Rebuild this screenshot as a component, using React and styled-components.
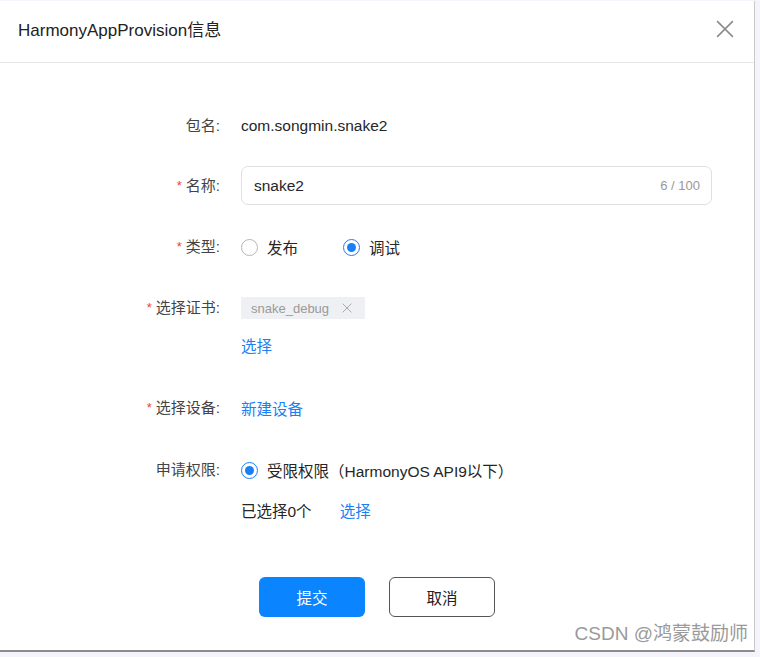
import styled, { createGlobalStyle } from "styled-components";

const GlobalStyle = createGlobalStyle`
  html, body {
    margin: 0;
    padding: 0;
    background: #f5f3fc;
    font-family: "Liberation Sans", "Noto Sans CJK SC", sans-serif;
  }
`;

const Page = styled.div`
  width: 760px;
  height: 657px;
  padding-top: 1px;
  box-sizing: border-box;
`;

const Dialog = styled.div`
  position: relative;
  width: 755px;
  height: 651px;
  background: #fff;
  border-right: 1px solid #c8c8c8;
  border-bottom: 2px solid #8c8c8c;
  box-sizing: border-box;
`;

const Header = styled.div`
  height: 62px;
  display: flex;
  align-items: center;
  justify-content: space-between;
  padding: 0 18px 6px 18px;
  box-sizing: border-box;
  border-bottom: 1px solid #e6e6e6;
`;

const Title = styled.h1`
  margin: 0;
  font-size: 17px;
  font-weight: 400;
  color: #222;
`;

const CloseButton = styled.button`
  border: none;
  background: none;
  padding: 0;
  margin-right: 2px;
  display: flex;
  cursor: pointer;
`;

const Body = styled.div`
  padding-top: 52px;
  display: flex;
  flex-direction: column;
`;

const Row = styled.div`
  display: flex;
  align-items: flex-start;
  margin-top: ${(p) => p.$mt || 0}px;
`;

const Label = styled.div`
  width: 241px;
  flex-shrink: 0;
  text-align: right;
  padding-right: 21px;
  box-sizing: border-box;
  font-size: 15px;
  color: #444;
  line-height: ${(p) => p.$lh || 22}px;
`;

const Star = styled.span`
  color: #f23c3c;
  margin-right: 4px;
  font-size: 13px;
  position: relative;
  top: -1px;
`;

const Control = styled.div`
  display: flex;
  flex-direction: column;
  gap: ${(p) => p.$gap || 0}px;
`;

const Line = styled.div`
  display: flex;
  align-items: center;
  height: 22px;
  font-size: 15.5px;
  color: #262626;
  gap: ${(p) => p.$gap || 0}px;
`;

const InputBox = styled.div`
  width: 471px;
  height: 39px;
  border: 1px solid #e0e0e0;
  border-radius: 7px;
  box-sizing: border-box;
  display: flex;
  align-items: center;
  justify-content: space-between;
  padding: 0 11px 0 12px;
  font-size: 15.5px;
  color: #262626;
`;

const Counter = styled.span`
  font-size: 13px;
  color: #999;
`;

const RadioItem = styled.label`
  display: flex;
  align-items: center;
  gap: 9px;
  font-size: 15.5px;
  color: #262626;
  margin-right: ${(p) => p.$mr || 0}px;
`;

const RadioDot = styled.span`
  width: 17px;
  height: 17px;
  border-radius: 50%;
  box-sizing: border-box;
  border: ${(p) => (p.$checked ? "1.5px solid #1a7ff5" : "1px solid #b5b5b5")};
  display: flex;
  align-items: center;
  justify-content: center;
  &::after {
    content: "";
    display: ${(p) => (p.$checked ? "block" : "none")};
    width: 9px;
    height: 9px;
    border-radius: 50%;
    background: #1a7ff5;
  }
`;

const Tag = styled.span`
  display: inline-flex;
  align-items: center;
  gap: 13px;
  height: 22px;
  padding: 0 13px 0 10px;
  background: #eef0f3;
  font-size: 13px;
  color: #9a9a9a;
`;

const LinkText = styled.a`
  font-size: 15.5px;
  color: #1a7ff5;
  cursor: pointer;
`;

const Footer = styled.div`
  display: flex;
  gap: 24px;
  padding-left: 259px;
  margin-top: 56px;
`;

const Button = styled.button`
  width: 106px;
  height: 40px;
  border-radius: 6px;
  font-family: inherit;
  font-size: 15.5px;
  cursor: pointer;
  box-sizing: border-box;
  border: ${(p) => (p.$primary ? "none" : "1px solid #555")};
  background: ${(p) => (p.$primary ? "#0a84ff" : "#fff")};
  color: ${(p) => (p.$primary ? "#fff" : "#222")};
`;

const Watermark = styled.div`
  position: absolute;
  right: 6px;
  bottom: 5px;
  font-size: 19px;
  color: #9a9a9a;
`;

const XIcon = ({ size, color, width }) => (
  <svg width={size} height={size} viewBox="0 0 16 16">
    <path d="M1 1L15 15M15 1L1 15" stroke={color} strokeWidth={width} fill="none" />
  </svg>
);

export default function App() {
  return (
    <>
      <GlobalStyle />
      <Page>
        <Dialog>
          <Header>
            <Title>HarmonyAppProvision信息</Title>
            <CloseButton>
              <XIcon size={18} color="#8a8a8a" width={1.4} />
            </CloseButton>
          </Header>
          <Body>
            <Row>
              <Label>包名:</Label>
              <Control>
                <Line>com.songmin.snake2</Line>
              </Control>
            </Row>
            <Row $mt={29}>
              <Label $lh={39}>
                <Star>*</Star>名称:
              </Label>
              <InputBox>
                <span>snake2</span>
                <Counter>6 / 100</Counter>
              </InputBox>
            </Row>
            <Row $mt={30}>
              <Label>
                <Star>*</Star>类型:
              </Label>
              <Line>
                <RadioItem $mr={45}>
                  <RadioDot />
                  发布
                </RadioItem>
                <RadioItem>
                  <RadioDot $checked />
                  调试
                </RadioItem>
              </Line>
            </Row>
            <Row $mt={38}>
              <Label>
                <Star>*</Star>选择证书:
              </Label>
              <Control $gap={15}>
                <Line>
                  <Tag>
                    snake_debug
                    <XIcon size={10} color="#9a9a9a" width={1.3} />
                  </Tag>
                </Line>
                <Line>
                  <LinkText>选择</LinkText>
                </Line>
              </Control>
            </Row>
            <Row $mt={41}>
              <Label>
                <Star>*</Star>选择设备:
              </Label>
              <Line>
                <LinkText>新建设备</LinkText>
              </Line>
            </Row>
            <Row $mt={39}>
              <Label>申请权限:</Label>
              <Control $gap={18}>
                <Line>
                  <RadioItem>
                    <RadioDot $checked />
                    受限权限（HarmonyOS API9以下）
                  </RadioItem>
                </Line>
                <Line $gap={28}>
                  <span>已选择0个</span>
                  <LinkText>选择</LinkText>
                </Line>
              </Control>
            </Row>
            <Footer>
              <Button $primary>提交</Button>
              <Button>取消</Button>
            </Footer>
          </Body>
          <Watermark>CSDN @鸿蒙鼓励师</Watermark>
        </Dialog>
      </Page>
    </>
  );
}
